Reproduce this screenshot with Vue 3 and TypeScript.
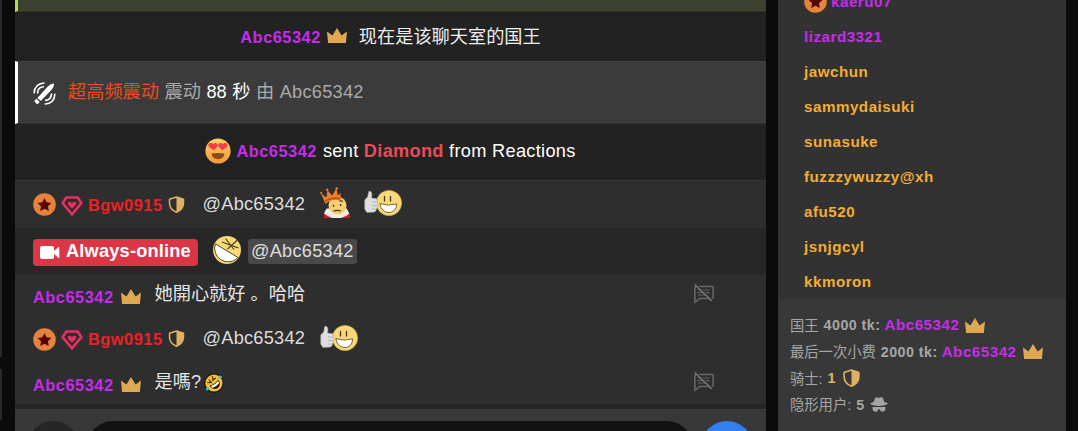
<script setup lang="ts">
interface Viewer {
  name: string
  tone: 'purple' | 'gold'
  badge?: boolean
}

const viewers: Viewer[] = [
  { name: 'kaeru07', tone: 'purple', badge: true },
  { name: 'lizard3321', tone: 'purple' },
  { name: 'jawchun', tone: 'gold' },
  { name: 'sammydaisuki', tone: 'gold' },
  { name: 'sunasuke', tone: 'gold' },
  { name: 'fuzzzywuzzy@xh', tone: 'gold' },
  { name: 'afu520', tone: 'gold' },
  { name: 'jsnjgcyl', tone: 'gold' },
  { name: 'kkmoron', tone: 'gold' },
]
</script>

<template>
  <svg class="defs" aria-hidden="true">
    <symbol id="crown" viewBox="0 0 20 15">
      <path d="M0 3.6 5.4 7.6 10 0l4.6 7.6L20 3.6 18.9 15H1.1Z" fill="#dfa953" />
    </symbol>
    <symbol id="shield" viewBox="0 0 16 17">
      <path d="M8 1 15 3.3V7c0 4.2-2.5 7.4-7 9.2C3.5 14.4 1 11.2 1 7V3.3Z" fill="none" stroke="#dfb15f" stroke-width="1.5" stroke-linejoin="round" />
      <path d="M8 1l7 2.3V7c0 4.2-2.500 7.400-7 9.200Z" fill="#dfb15f" />
    </symbol>
    <symbol id="star" viewBox="0 0 22 22">
      <circle cx="11" cy="11" r="10.800" fill="#e5833d" />
      <path d="m11 4.800 2 4 4.600.7-3.300 3.200.8 4.500-4.100-2.100-4.100 2.100.8-4.500-3.300-3.200 4.600-.7Z" fill="#560507" />
    </symbol>
    <symbol id="gem" viewBox="0 0 22 20">
      <path d="M5.300 1.500h11.400l3.700 5.700L11 18.300 1.600 7.200Z" fill="none" stroke="#e92f62" stroke-width="2.600" />
      <path d="M11 12.700 7.300 9c-1.200-1.400-.6-3.200 1.100-3.300 1.200 0 2 .6 2.600 1.500.6-.9 1.400-1.500 2.600-1.500 1.700.1 2.300 1.900 1.100 3.300Z" fill="#e92f62" />
    </symbol>
    <symbol id="thumb" viewBox="0 0 38 28">
      <circle cx="25" cy="14" r="12.600" fill="#f8d878" stroke="#d8ae4c" stroke-width=".6" />
      <path d="M20.500 7.500v4.500M26.500 7.500v4.500" stroke="#45361c" stroke-width="1.300" stroke-linecap="round" />
      <path d="M15.800 14.500q8 3 17 .4-.8 8.200-7.800 8.700-7.600-.3-9.200-9.100Z" fill="#fff" stroke="#59491f" stroke-width=".8" />
      <path d="M4.700 2.400c2-.8 3.300 1 3.200 3.700l-.2 3 4.300.5c1.500.5 1.900 2.300 1.100 3.400 1.200 1.100 1 2.800.1 3.600.8 1.300.2 2.800-.8 3.300.2 2-1.200 3.200-3.500 3.300l-6.100.2L.7 20V11l3-3.300Z" fill="#dedede" stroke="#9e9e9e" stroke-width=".5" />
      <path d="M8 13h5M8 16.600h5M8 20h4.300" stroke="#a6a6a6" stroke-width=".7" />
    </symbol>
    <symbol id="no-chat" viewBox="0 0 22 20">
      <path d="M1.800 18.500V4q0-1.500 1.500-1.500h15.400q1.500 0 1.500 1.500v9q0 1.500-1.500 1.500H6.500Z" fill="none" stroke="#676767" stroke-width="1.600" stroke-linejoin="round" />
      <path d="M5 6h11.500M4.500 8.500h12M5 11h11" stroke="#676767" stroke-width="1.100" />
      <path d="M3 .5 19.500 16" stroke="#2e2e2e" stroke-width="1.600" />
      <path d="M1.800 .5 18.800 17" stroke="#777" stroke-width="1.600" />
    </symbol>
  </svg>

  <div class="page">
    <div class="edge"><i class="edge-tall"></i><i class="edge-short"></i></div>

    <main class="chat">
      <div class="tip-strip"></div>
      <div class="row notice king">
        <b class="name purple">Abc65342</b>
        <svg class="crown"><use href="#crown" /></svg>
        <span class="cjk king-text">现在是该聊天室的国王</span>
      </div>
      <div class="row buzz">
        <svg class="toy" viewBox="0 0 24 24">
          <path d="M4.600 16.700 15.500 4.600Q18.300 1.700 22 1.500 22.100 5.500 19.200 8.400L8 19.800Z" fill="#fff" />
          <path d="m3.600 17.500 3.400 3.400-2.300 2.200q-1.800-.2-3.400-3.200Z" fill="#fff" />
          <path d="M1.200 11.300Q1.700 2.200 11.300 1.100M4.800 11.500Q5 5.600 10.700 5M22.800 12.800Q22.300 22.200 12.800 23M19.300 12.700Q18.900 18.500 13.300 19.200" fill="none" stroke="#fff" stroke-width="1.700" stroke-linecap="round" />
        </svg>
        <p class="buzz-text"><span class="orange">超高频震动</span> 震动 <span class="white">88 秒</span> 由 <span class="latin">Abc65342</span></p>
      </div>
      <div class="row notice sent">
        <svg class="hearts" viewBox="0 0 26 26">
          <defs><linearGradient id="face" x2="0" y2="1"><stop stop-color="#fbd15e" /><stop offset="1" stop-color="#f49a3d" /></linearGradient></defs>
          <circle cx="13" cy="13" r="12.600" fill="url(#face)" />
          <path d="M8.900 12.300 4.500 9.400C2.400 7.700 3.500 4.800 6 5c1 0 1.700.5 2.200 1.200.7-.9 1.900-1.400 3.100-1 1.600.6 1.800 2.500.9 3.900ZM17.100 12.300l4.400-2.900C23.600 7.700 22.500 4.800 20 5c-1 0-1.700.5-2.200 1.200-.7-.9-1.900-1.400-3.100-1-1.600.6-1.800 2.500-.9 3.900Z" fill="#f33c4b" />
          <path d="M6.500 15.500q6.500-.9 13 0-.6 5.500-6.500 5.700-5.900-.2-6.500-5.700Z" fill="#8c4d19" />
        </svg>
        <b class="name purple">Abc65342</b>
        <span class="sent-text">sent <b class="diamond">Diamond</b> from Reactions</span>
      </div>
      <div class="row mention">
        <svg class="star"><use href="#star" /></svg>
        <svg class="gem"><use href="#gem" /></svg>
        <b class="name red">Bgw0915</b>
        <svg class="shield"><use href="#shield" /></svg>
        <span class="latin at">@Abc65342</span>
        <svg class="king-face" viewBox="0 0 32 32">
          <path d="M4.500 31q-1.500-6 2.500-9.500l19-.5q4 4 3 10Z" fill="#f0ece6" />
          <path d="M4 31v-4.500q4 3 8 4.500ZM30 31v-5q-4 4-9 5Z" fill="#c91d20" />
          <circle cx="17.500" cy="18.500" r="9" fill="#f5cf70" />
          <path d="M7.500 25q9 5.500 20-.5l1 2.500q-5 3-11 3-7 0-11-3Z" fill="#f0ece6" />
          <path d="M5.500 17 1 6.500l5.500 4L7.300 3l4.700 5.500L16.500 1.500l1.300 7L20.500 6l.3 8Q11.500 11 5.500 17Z" fill="#ee8028" />
          <path d="M5 14.500q6-4.500 15.500-3" fill="none" stroke="#c6491f" stroke-width="1.500" />
          <circle cx="1.200" cy="6" r="1.100" fill="#ee8028" /><circle cx="7.300" cy="2.700" r="1.200" fill="#ee8028" /><circle cx="16.700" cy="1.500" r="1.300" fill="#ee8028" />
          <path d="M13.500 17.700v2M20.500 17v2M13.500 24q3.500-1 7.200-.1M19.500 14q2-.6 3.300.6" stroke="#433326" stroke-width="1.300" fill="none" />
        </svg>
        <svg class="thumb"><use href="#thumb" /></svg>
      </div>
      <div class="row online">
        <span class="pill">
          <svg class="camera" viewBox="0 0 20 13"><rect width="14" height="13" rx="2" fill="#fff" /><path d="m14 5 4.300-3.700q1-.7 1 .5v9.400q0 1.200-1 .5L14 8Z" fill="#fff" /></svg>
          <b>Always-online</b>
        </span>
        <svg class="laugh" viewBox="0 0 30 30">
          <circle cx="15" cy="15" r="14" fill="#f8d878" />
          <path d="M3.500 9 26 22.500Q21 28 13 26.500 3 23.500 2.500 13Z" fill="#fff" stroke="#5b481d" stroke-width="1" />
          <path d="m10 7 16.500 6M25.500 5 15.500 14M13.500 3.500l8.500 11" fill="none" stroke="#4b3b1b" stroke-width="1.100" />
        </svg>
        <span class="latin highlight">@Abc65342</span>
      </div>
      <div class="messages">
        <div class="row message">
          <b class="name purple low">Abc65342</b>
          <svg class="crown"><use href="#crown" /></svg>
          <span class="cjk body-text">她開心就好 。哈哈</span>
          <svg class="no-chat"><use href="#no-chat" /></svg>
        </div>
        <div class="row mention reply">
          <svg class="star"><use href="#star" /></svg>
          <svg class="gem"><use href="#gem" /></svg>
          <b class="name red">Bgw0915</b>
          <svg class="shield"><use href="#shield" /></svg>
          <span class="latin at">@Abc65342</span>
          <svg class="thumb reply-thumb"><use href="#thumb" /></svg>
        </div>
        <div class="row message last">
          <b class="name purple low">Abc65342</b>
          <svg class="crown"><use href="#crown" /></svg>
          <span class="cjk body-text">是嗎?</span>
          <svg class="rofl" viewBox="0 0 20 20">
            <circle cx="10" cy="10" r="9.800" fill="#1c1608" />
            <circle cx="10" cy="10" r="8.600" fill="#f6bf35" />
            <path d="M5.600 12.500q5.500-1 8.700-5.700 3.500 4.700-.7 8.500-4.500 2.500-8-2.800Z" fill="#241a12" />
            <path d="M7 12.900q4.500-1.300 7.200-5l1 2.200q-2.500 3.700-6.700 5Z" fill="#fff" />
            <path d="m3.300 9.500 4 .2-2.300-3M8.500 3.300l.3 3.800 3-2.200" fill="none" stroke="#44300c" stroke-width="1.200" />
            <path d="M2 14.800l3-.6q.5 2.600-1.400 3.400-2.200-.4-1.600-2.800ZM14.400 5.200l.8-2.700q2.800-.2 3 1.900-1.100 1.800-3.800.8Z" fill="#49b7dc" />
          </svg>
          <svg class="no-chat"><use href="#no-chat" /></svg>
        </div>
      </div>
      <div class="composer">
        <span class="round"></span><span class="field"></span><span class="round send"></span>
      </div>
    </main>

    <aside class="side">
      <ul class="viewers">
        <li v-for="v in viewers" :key="v.name">
          <svg v-if="v.badge" class="star"><use href="#star" /></svg>
          <b class="viewer" :class="v.tone">{{ v.name }}</b>
        </li>
      </ul>
      <div class="stats">
        <div class="stat"><span>国王</span><b class="num">4000 tk:</b><b class="viewer purple">Abc65342</b><svg class="crown"><use href="#crown" /></svg></div>
        <div class="stat"><span>最后一次小费</span><b class="num">2000 tk:</b><b class="viewer purple">Abc65342</b><svg class="crown"><use href="#crown" /></svg></div>
        <div class="stat"><span>骑士:</span><b class="num knight">1</b><svg class="shield"><use href="#shield" /></svg></div>
        <div class="stat"><span>隐形用户:</span><b class="num hidden-count">5</b>
          <svg class="spy" viewBox="0 0 18 15">
            <path d="M3.700 5 5 1.200Q5.600-.2 7 .3l2 .7 2-.7q1.400-.5 2 .9L14.300 5q3 .5 3.700 1.600Q16 9 9 9T0 6.600Q.7 5.500 3.700 5Z" fill="#a4a4a4" />
            <path d="M2.500 10h13v1.300q-.4 3.500-3.100 3.500-2.100 0-2.700-2.600H8.300q-.6 2.600-2.700 2.600-2.700 0-3.100-3.500Z" fill="#a4a4a4" />
          </svg>
        </div>
      </div>
    </aside>
  </div>
</template>

<style>
body { background: #fdfdfd; overflow: hidden; }
</style>

<style scoped>
.defs { display: block; width: 0; height: 0; }
.page {
  display: flex;
  box-sizing: border-box;
  width: 1078px;
  height: 431px;
  overflow: hidden;
  background: #0b0b0b;
  font-family: "Liberation Sans", "Noto Sans CJK SC", sans-serif;
  font-size: 18.2px;
}
svg { flex: none; }
.edge { width: 2px; margin-right: 13px; flex: none; display: flex; flex-direction: column; gap: 12px; }
.edge i { background: #292929; }
.edge-tall { height: 357px; }
.edge-short { height: 51px; }
.chat { width: 751px; flex: none; margin-right: 12px; background: #2e2e2e; }
.tip-strip { height: 11px; background: #3b402f; border-left: 3px solid #b4da53; border-bottom: 1px solid #303229; }
.row { display: flex; align-items: center; box-sizing: border-box; white-space: nowrap; line-height: 24px; }
.notice { justify-content: center; background: #222; color: #fff; }
.king { height: 49px; }
.name { font-size: 16.4px; letter-spacing: 0.5px; line-height: 20px; }
.purple { color: #c52cea; }
.gold { color: #f3ad32; }
.red { color: #f01f25; }
.crown { width: 20px; height: 15px; margin-left: 6px; }
.king .crown { margin-top: -2px; }
.king-text { margin-left: 12px; color: #eee; }
.buzz { height: 63px; padding-left: 15px; background: #3b3b3b; border-left: 3px solid #fff; border-top: 1px solid #434343; border-bottom: 1px solid #303030; color: #a9a9a9; }
.toy { width: 23px; height: 23px; margin-top: 1px; }
.buzz-text { margin: -2px 0 0 12px; word-spacing: 0.5px; }
.orange { color: #ef4a19; }
.white { color: #fff; }
.latin { letter-spacing: 0.25px; }
.sent { height: 56px; padding-bottom: 2px; }
.hearts { width: 26px; height: 26px; margin-right: 5px; }
.sent-text { margin-left: 6px; letter-spacing: 0.3px; }
.diamond { color: #e84c59; }
.mention { height: 48px; padding-left: 18px; background: #2e2e2e; border-top: 1px solid #373737; color: #ddd; }
.mention .at { margin-top: -2px; }
.star { width: 23px; height: 23px; }
.gem { width: 22px; height: 20px; margin: 2px 5px 0 5px; }
.shield { width: 17px; height: 17px; margin-left: 5px; }
.mention .shield { margin-top: -1px; }
.at { margin-left: 18px; }
.king-face { width: 32px; height: 32px; margin-left: 15px; margin-top: -4px; }
.thumb { width: 38px; height: 28px; margin-left: 12px; margin-top: -3px; }
.online { height: 47px; padding-left: 18px; background: #272727; color: #ddd; }
.pill { display: flex; align-items: center; box-sizing: border-box; width: 165px; height: 27px; padding-left: 7px; margin-top: 2px; border-radius: 4px; background: #dc3545; color: #fff; letter-spacing: 0.2px; }
.pill b { margin-top: -3px; }
.camera { width: 20px; height: 13px; margin-right: 6px; }
.laugh { width: 30px; height: 30px; margin-left: 14px; margin-top: -4px; }
.highlight { height: 25px; padding: 0 3px; margin-left: 6px; border-radius: 3px; background: #494949; }
.messages { height: 129px; border-bottom: 5px solid #262626; }
.message { height: 39px; padding-left: 18px; color: #e5e5e5; }
.low { margin-top: 5px; }
.message .crown { margin-top: 3px; margin-left: 7px; }
.body-text { margin-left: 14px; margin-top: -2px; }
.no-chat { width: 22px; height: 20px; margin-left: auto; margin-right: 51px; }
.message .no-chat { margin-top: -2px; }
.reply { height: 50px; border: 0; }
.reply-thumb { margin-left: 15px; }
.last { height: 40px; padding-bottom: 3px; }
.rofl { width: 20px; height: 20px; margin-left: 3px; }
.composer { display: flex; height: 22px; padding: 12px 12px 0; background: #383838; }
.round { flex: none; width: 52px; height: 52px; border-radius: 50%; background: #262626; }
.send { background: #3080ed; }
.field { width: 606px; height: 52px; margin: 0 8px; border-radius: 26px; background: #121212; }
.side { width: 288px; flex: none; background: #323232; }
.viewers { height: 299px; margin: 0; padding: 0; list-style: none; display: flex; flex-direction: column; justify-content: flex-end; }
.viewers li { display: flex; align-items: center; flex: none; height: 35px; padding-left: 26px; }
.viewers .star { margin-right: 4px; }
.viewer { font-size: 15.2px; letter-spacing: 0.5px; line-height: 20px; }
.stats { height: 132px; box-sizing: border-box; padding: 13px 0 0 12px; background: #383838; color: #a6a6a6; font-size: 14.3px; }
.stat { display: flex; align-items: center; height: 26.5px; white-space: nowrap; }
.stat span { margin-top: -2px; }
.num { margin: 0 4px 0 5px; font-size: 14.3px; letter-spacing: 0.45px; }
.stat .shield { width: 19px; height: 18px; margin-left: 2px; }
.knight { color: #e2b162; }
.spy { width: 18px; height: 15px; margin-left: 1px; }
</style>
